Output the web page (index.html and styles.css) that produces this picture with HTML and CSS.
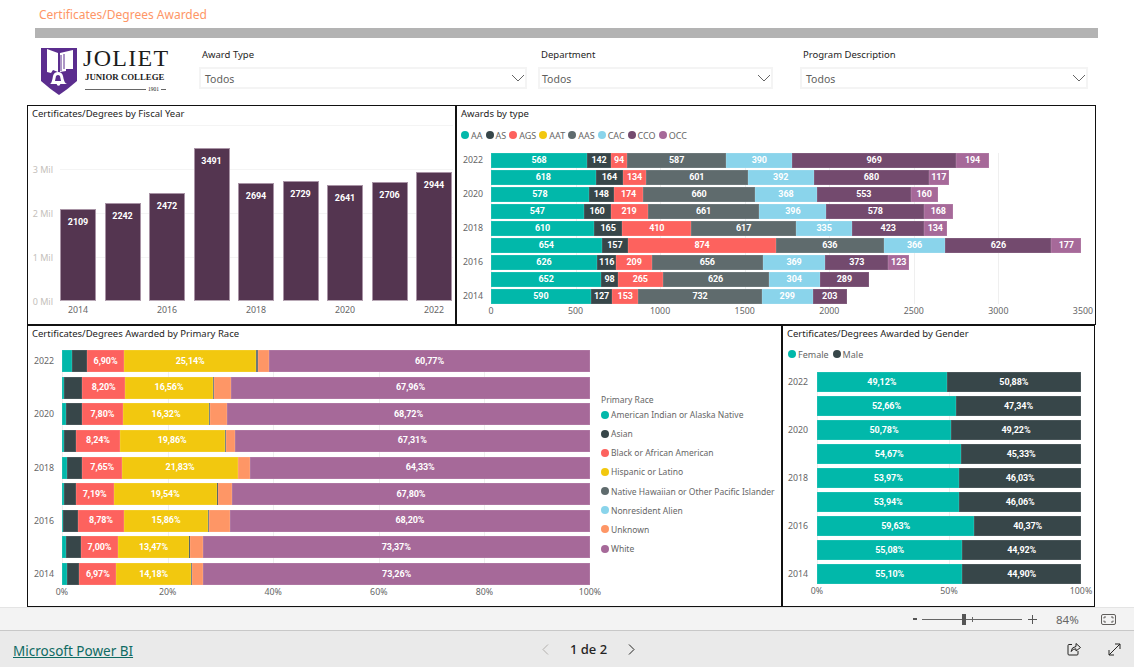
FILE: index.html
```html
<!DOCTYPE html>
<html lang="en">
<head>
<meta charset="utf-8">
<title>Certificates/Degrees Awarded</title>
<link rel="stylesheet" href="styles.css">
</head>
<body>
<div class="page">
  <header class="report-title">Certificates/Degrees Awarded</header>
  <div class="rule"></div>
  <section class="filters">
    <div class="logo">
      <svg class="shield" viewBox="0 0 36 47" width="36" height="47" aria-hidden="true">
        <path d="M0 0 L36 0 L36 33 Q27 41 18 47 Q9 41 0 33 Z" fill="#5b2d8e"/>
        <path d="M6 1 L17 5 L17 24 L12 22 L10 25 L6 24 Z" fill="#fff"/>
        <path d="M19 5 L32 2 L32 21 L25 21 L25 23 L19 24 Z" fill="#fff"/>
        <path d="M20 7 L20 23 M23 6 L23 21" stroke="#5b2d8e" stroke-width="1" fill="none"/>
        <path d="M9 36 Q11 35 12 28 Q13 24 17 24 Q21 24 22 28 Q23 35 26 36 Z" fill="#fff"/>
        <path d="M15 28 Q17 26 19 28 L20 33 L14 33 Z" fill="#5b2d8e"/>
        <circle cx="17.5" cy="36" r="1.8" fill="#fff"/>
      </svg>
      <div class="wordmark">
        <div class="wm-joliet">JOLIET</div>
        <div class="wm-college">JUNIOR COLLEGE</div>
        <div class="wm-year"><span class="wm-line"></span><span>1901</span><span class="wm-tail"></span></div>
      </div>
    </div>
    <div class="slicer slicer-award">
      <div class="slicer-label">Award Type</div>
      <div class="slicer-box"><span>Todos</span><svg class="chev" viewBox="0 0 14 8" width="14" height="8"><path d="M1 1 L7 7 L13 1" fill="none" stroke="#666" stroke-width="1"/></svg></div>
    </div>
    <div class="slicer slicer-dept">
      <div class="slicer-label">Department</div>
      <div class="slicer-box"><span>Todos</span><svg class="chev" viewBox="0 0 14 8" width="14" height="8"><path d="M1 1 L7 7 L13 1" fill="none" stroke="#666" stroke-width="1"/></svg></div>
    </div>
    <div class="slicer slicer-prog">
      <div class="slicer-label">Program Description</div>
      <div class="slicer-box"><span>Todos</span><svg class="chev" viewBox="0 0 14 8" width="14" height="8"><path d="M1 1 L7 7 L13 1" fill="none" stroke="#666" stroke-width="1"/></svg></div>
    </div>
  </section>

  <main class="dash">
    <div class="dash-row row-top">
      <section class="panel panel-year">
        <h2 class="panel-title">Certificates/Degrees by Fiscal Year</h2>
        <div class="year-chart">
          <div class="y-axis"><span>3 Mil</span><span>2 Mil</span><span>1 Mil</span><span>0 Mil</span></div>
          <div class="year-main">
            <div class="columns">
              <div class="col" style="--v:2109">2109</div>
              <div class="col" style="--v:2242">2242</div>
              <div class="col" style="--v:2472">2472</div>
              <div class="col" style="--v:3491">3491</div>
              <div class="col" style="--v:2694">2694</div>
              <div class="col" style="--v:2729">2729</div>
              <div class="col" style="--v:2641">2641</div>
              <div class="col" style="--v:2706">2706</div>
              <div class="col" style="--v:2944">2944</div>
            </div>
            <div class="col-axis"><span>2014</span><span></span><span>2016</span><span></span><span>2018</span><span></span><span>2020</span><span></span><span>2022</span></div>
          </div>
        </div>
      </section>

      <section class="panel panel-type">
        <h2 class="panel-title">Awards by type</h2>
        <ul class="legend legend-h">
          <li><i class="dot c-aa"></i>AA</li>
          <li><i class="dot c-as"></i>AS</li>
          <li><i class="dot c-ags"></i>AGS</li>
          <li><i class="dot c-aat"></i>AAT</li>
          <li><i class="dot c-aas"></i>AAS</li>
          <li><i class="dot c-cac"></i>CAC</li>
          <li><i class="dot c-cco"></i>CCO</li>
          <li><i class="dot c-occ"></i>OCC</li>
        </ul>
        <div class="hchart">
          <div class="cats"><span>2022</span><span></span><span>2020</span><span></span><span>2018</span><span></span><span>2016</span><span></span><span>2014</span></div>
          <div class="plot">
            <div class="bar"><b class="c-aa" style="--v:568">568</b><b class="c-as" style="--v:142">142</b><b class="c-ags" style="--v:94">94</b><b class="c-aas" style="--v:587">587</b><b class="c-cac" style="--v:390">390</b><b class="c-cco" style="--v:969">969</b><b class="c-occ" style="--v:194">194</b></div>
            <div class="bar"><b class="c-aa" style="--v:618">618</b><b class="c-as" style="--v:164">164</b><b class="c-ags" style="--v:134">134</b><b class="c-aas" style="--v:601">601</b><b class="c-cac" style="--v:392">392</b><b class="c-cco" style="--v:680">680</b><b class="c-occ" style="--v:117">117</b></div>
            <div class="bar"><b class="c-aa" style="--v:578">578</b><b class="c-as" style="--v:148">148</b><b class="c-ags" style="--v:174">174</b><b class="c-aas" style="--v:660">660</b><b class="c-cac" style="--v:368">368</b><b class="c-cco" style="--v:553">553</b><b class="c-occ" style="--v:160">160</b></div>
            <div class="bar"><b class="c-aa" style="--v:547">547</b><b class="c-as" style="--v:160">160</b><b class="c-ags" style="--v:219">219</b><b class="c-aas" style="--v:661">661</b><b class="c-cac" style="--v:396">396</b><b class="c-cco" style="--v:578">578</b><b class="c-occ" style="--v:168">168</b></div>
            <div class="bar"><b class="c-aa" style="--v:610">610</b><b class="c-as" style="--v:165">165</b><b class="c-ags" style="--v:410">410</b><b class="c-aas" style="--v:617">617</b><b class="c-cac" style="--v:335">335</b><b class="c-cco" style="--v:423">423</b><b class="c-occ" style="--v:134">134</b></div>
            <div class="bar"><b class="c-aa" style="--v:654">654</b><b class="c-as" style="--v:157">157</b><b class="c-ags" style="--v:874">874</b><b class="c-aas" style="--v:636">636</b><b class="c-cac" style="--v:366">366</b><b class="c-cco" style="--v:626">626</b><b class="c-occ" style="--v:177">177</b></div>
            <div class="bar"><b class="c-aa" style="--v:626">626</b><b class="c-as" style="--v:116">116</b><b class="c-ags" style="--v:209">209</b><b class="c-aas" style="--v:656">656</b><b class="c-cac" style="--v:369">369</b><b class="c-cco" style="--v:373">373</b><b class="c-occ" style="--v:123">123</b></div>
            <div class="bar"><b class="c-aa" style="--v:652">652</b><b class="c-as" style="--v:98">98</b><b class="c-ags" style="--v:265">265</b><b class="c-aas" style="--v:626">626</b><b class="c-cac" style="--v:304">304</b><b class="c-cco" style="--v:289">289</b></div>
            <div class="bar"><b class="c-aa" style="--v:590">590</b><b class="c-as" style="--v:127">127</b><b class="c-ags" style="--v:153">153</b><b class="c-aas" style="--v:732">732</b><b class="c-cac" style="--v:299">299</b><b class="c-cco" style="--v:203">203</b></div>
          </div>
          <div class="x-axis"><span>0</span><span>500</span><span>1000</span><span>1500</span><span>2000</span><span>2500</span><span>3000</span><span>3500</span></div>
        </div>
      </section>
    </div>

    <div class="dash-row row-bottom">
      <section class="panel panel-race">
        <h2 class="panel-title">Certificates/Degrees Awarded by Primary Race</h2>
        <div class="race-body">
          <div class="hchart">
            <div class="cats"><span>2022</span><span></span><span>2020</span><span></span><span>2018</span><span></span><span>2016</span><span></span><span>2014</span></div>
            <div class="plot">
              <div class="bar"><b class="c-aa" style="--v:1.9"></b><b class="c-as" style="--v:2.9"></b><b class="c-ags" style="--v:6.9">6,90%</b><b class="c-aat" style="--v:25.14">25,14%</b><b class="c-aas" style="--v:.3"></b><b class="c-unk" style="--v:2.09"></b><b class="c-occ" style="--v:60.77">60,77%</b></div>
              <div class="bar"><b class="c-aa" style="--v:.4"></b><b class="c-as" style="--v:3.4"></b><b class="c-ags" style="--v:8.2">8,20%</b><b class="c-aat" style="--v:16.56">16,56%</b><b class="c-aas" style="--v:.2"></b><b class="c-unk" style="--v:3.28"></b><b class="c-occ" style="--v:67.96">67,96%</b></div>
              <div class="bar"><b class="c-aa" style="--v:.75"></b><b class="c-as" style="--v:3"></b><b class="c-ags" style="--v:7.8">7,80%</b><b class="c-aat" style="--v:16.32">16,32%</b><b class="c-aas" style="--v:.1"></b><b class="c-unk" style="--v:3.31"></b><b class="c-occ" style="--v:68.72">68,72%</b></div>
              <div class="bar"><b class="c-aa" style="--v:.35"></b><b class="c-as" style="--v:2.35"></b><b class="c-ags" style="--v:8.24">8,24%</b><b class="c-aat" style="--v:19.86">19,86%</b><b class="c-aas" style="--v:.2"></b><b class="c-unk" style="--v:1.69"></b><b class="c-occ" style="--v:67.31">67,31%</b></div>
              <div class="bar"><b class="c-aa" style="--v:1"></b><b class="c-as" style="--v:2.8"></b><b class="c-ags" style="--v:7.65">7,65%</b><b class="c-aat" style="--v:21.83">21,83%</b><b class="c-aas" style="--v:.1"></b><b class="c-unk" style="--v:2.29"></b><b class="c-occ" style="--v:64.33">64,33%</b></div>
              <div class="bar"><b class="c-aa" style="--v:.3"></b><b class="c-as" style="--v:2.3"></b><b class="c-ags" style="--v:7.19">7,19%</b><b class="c-aat" style="--v:19.54">19,54%</b><b class="c-as" style="--v:.2"></b><b class="c-unk" style="--v:2.67"></b><b class="c-occ" style="--v:67.8">67,80%</b></div>
              <div class="bar"><b class="c-aa" style="--v:.2"></b><b class="c-as" style="--v:2.8"></b><b class="c-ags" style="--v:8.78">8,78%</b><b class="c-aat" style="--v:15.86">15,86%</b><b class="c-aas" style="--v:.3"></b><b class="c-unk" style="--v:3.86"></b><b class="c-occ" style="--v:68.2">68,20%</b></div>
              <div class="bar"><b class="c-aa" style="--v:.7"></b><b class="c-as" style="--v:2.9"></b><b class="c-ags" style="--v:7">7,00%</b><b class="c-aat" style="--v:13.47">13,47%</b><b class="c-as" style="--v:.16"></b><b class="c-unk" style="--v:2.4"></b><b class="c-occ" style="--v:73.37">73,37%</b></div>
              <div class="bar"><b class="c-aa" style="--v:1"></b><b class="c-as" style="--v:2.3"></b><b class="c-ags" style="--v:6.97">6,97%</b><b class="c-aat" style="--v:14.18">14,18%</b><b class="c-aas" style="--v:.2"></b><b class="c-unk" style="--v:2.09"></b><b class="c-occ" style="--v:73.26">73,26%</b></div>
            </div>
            <div class="x-axis"><span>0%</span><span>20%</span><span>40%</span><span>60%</span><span>80%</span><span>100%</span></div>
          </div>
          <div class="race-legend">
            <div class="legend-title">Primary Race</div>
            <ul class="legend legend-v">
              <li><i class="dot c-aa"></i>American Indian or Alaska Native</li>
              <li><i class="dot c-as"></i>Asian</li>
              <li><i class="dot c-ags"></i>Black or African American</li>
              <li><i class="dot c-aat"></i>Hispanic or Latino</li>
              <li><i class="dot c-aas"></i>Native Hawaiian or Other Pacific Islander</li>
              <li><i class="dot c-cac"></i>Nonresident Alien</li>
              <li><i class="dot c-unk"></i>Unknown</li>
              <li><i class="dot c-occ"></i>White</li>
            </ul>
          </div>
        </div>
      </section>

      <section class="panel panel-gender">
        <h2 class="panel-title">Certificates/Degrees Awarded by Gender</h2>
        <ul class="legend legend-h">
          <li><i class="dot c-aa"></i>Female</li>
          <li><i class="dot c-as"></i>Male</li>
        </ul>
        <div class="hchart">
          <div class="cats"><span>2022</span><span></span><span>2020</span><span></span><span>2018</span><span></span><span>2016</span><span></span><span>2014</span></div>
          <div class="plot">
            <div class="bar"><b class="c-aa" style="--v:49.12">49,12%</b><b class="c-as" style="--v:50.88">50,88%</b></div>
            <div class="bar"><b class="c-aa" style="--v:52.66">52,66%</b><b class="c-as" style="--v:47.34">47,34%</b></div>
            <div class="bar"><b class="c-aa" style="--v:50.78">50,78%</b><b class="c-as" style="--v:49.22">49,22%</b></div>
            <div class="bar"><b class="c-aa" style="--v:54.67">54,67%</b><b class="c-as" style="--v:45.33">45,33%</b></div>
            <div class="bar"><b class="c-aa" style="--v:53.97">53,97%</b><b class="c-as" style="--v:46.03">46,03%</b></div>
            <div class="bar"><b class="c-aa" style="--v:53.94">53,94%</b><b class="c-as" style="--v:46.06">46,06%</b></div>
            <div class="bar"><b class="c-aa" style="--v:59.63">59,63%</b><b class="c-as" style="--v:40.37">40,37%</b></div>
            <div class="bar"><b class="c-aa" style="--v:55.08">55,08%</b><b class="c-as" style="--v:44.92">44,92%</b></div>
            <div class="bar"><b class="c-aa" style="--v:55.1">55,10%</b><b class="c-as" style="--v:44.9">44,90%</b></div>
          </div>
          <div class="x-axis"><span>0%</span><span>50%</span><span>100%</span></div>
        </div>
      </section>
    </div>
  </main>

  <div class="zoombar">
    <span class="zoom-minus"></span>
    <div class="zoom-track"><span class="zoom-tick"></span><span class="zoom-thumb"></span></div>
    <svg class="zoom-plus" viewBox="0 0 9 9" width="9" height="9"><path d="M4.5 0 V9 M0 4.5 H9" stroke="#555" stroke-width="1"/></svg>
    <span class="zoom-value">84%</span>
    <svg class="zoom-fit" viewBox="0 0 15 11" width="15" height="11"><rect x=".5" y=".5" width="14" height="10" rx="1.5" fill="none" stroke="#605e5c"/><path d="M3 4.5 V3 H5 M10 3 H12 V4.5 M12 6.5 V8 H10 M5 8 H3 V6.5" fill="none" stroke="#605e5c"/></svg>
  </div>

  <footer class="footer">
    <a class="pbi-link" href="#">Microsoft Power BI</a>
    <nav class="pager">
      <svg viewBox="0 0 7 11" width="7" height="11"><path d="M6 .5 L1 5.5 L6 10.5" fill="none" stroke="#b3b0ad" stroke-width="1"/></svg>
      <span class="pager-text">1 de 2</span>
      <svg viewBox="0 0 7 11" width="7" height="11"><path d="M1 .5 L6 5.5 L1 10.5" fill="none" stroke="#252423" stroke-width="1"/></svg>
    </nav>
    <div class="footer-icons">
      <svg viewBox="0 0 14 14" width="14" height="14"><path d="M5 2.5 H2 Q1 2.5 1 3.5 V12 Q1 13 2 13 H10 Q11 13 11 12 V9" fill="none" stroke="#252423"/><path d="M4 9.5 Q4.5 5 9 4.5 V1.5 L13.5 5.5 L9 9 V6.8 Q6 6.8 4 9.5 Z" fill="none" stroke="#252423"/></svg>
      <svg viewBox="0 0 13 13" width="13" height="13"><path d="M1 12 L12 1 M7 1 H12 V6 M1 7 V12 H6" fill="none" stroke="#252423"/></svg>
    </div>
  </footer>
</div>
</body>
</html>
```
FILE: styles.css
```css
* { box-sizing: border-box; }
html, body { margin: 0; padding: 0; background: #fff; }
body { font-family: "Noto Sans", "Open Sans", sans-serif; color: #252423; overflow: hidden; }
.page { width: 1134px; height: 667px; display: flex; flex-direction: column; overflow: hidden; }

.report-title { height: 28px; padding: 6px 0 0 39px; font-size: 12px; line-height: 17px; color: #fe9666; }
.rule { height: 10px; margin: 0 36px 0 35px; background: #b3b3b3; }

.filters { height: 67px; padding: 8px 0 0 41px; display: flex; align-items: flex-start; }
.logo { width: 125px; display: flex; gap: 6px; padding-top: 2px; }
.shield { flex: none; }
.wordmark { font-family: "Liberation Serif", serif; color: #1c1c1c; flex: 1; }
.wm-joliet { font-size: 24px; line-height: 20px; letter-spacing: 1.3px; white-space: nowrap; }
.wm-college { font-size: 8.8px; line-height: 11px; margin-top: 4px; white-space: nowrap; font-weight: bold; padding-left: 2px; }
.wm-year { display: flex; align-items: center; gap: 2px; font-size: 5.5px; line-height: 8px; margin-top: 2px; padding-left: 2px; }
.wm-line { width: 61px; height: 1px; background: #666; }
.wm-tail { width: 5px; height: 1px; background: #666; }

.slicer { display: flex; flex-direction: column; }
.slicer-label { height: 21px; padding: 2px 0 0 3px; font-size: 9.5px; line-height: 14px; }
.slicer-box { height: 22px; border: 2px solid #f4f4f4; display: flex; align-items: center; justify-content: space-between; padding: 1px 0 0 4px; font-size: 10.5px; color: #605e5c; }
.chev { margin-top: -2px; }
.slicer-award { width: 328px; margin-left: 33px; }
.slicer-dept { width: 235px; margin-left: 11px; }
.slicer-dept .slicer-box { padding-left: 2px; }
.slicer-prog { width: 288px; margin-left: 27px; }

.dash { margin-left: 27px; display: flex; flex-direction: column; height: 502px; }
.dash-row { display: flex; }
.row-top { height: 220px; }
.row-bottom { height: 282px; }
.panel { border: 1px solid #111; padding: 0; }
.panel-year { width: 429px; }
.panel-type { width: 640px; }
.panel-race { width: 755px; }
.panel-gender { width: 313px; }
.panel-title { margin: 0; font-weight: 400; font-size: 9.5px; line-height: 14px; padding: 1px 0 0 4px; color: #252423; white-space: nowrap; }

.year-chart { display: flex; }
.y-axis { width: 32px; margin-top: 27px; display: flex; flex-direction: column; font-size: 9px; color: #c4c0bb; text-align: right; padding-right: 7px; }
.y-axis span { height: 44px; line-height: 44px; white-space: nowrap; }
.year-main { display: flex; flex-direction: column; }
.columns { height: 180px; display: grid; grid-template-columns: repeat(9, 36px); column-gap: 8.5px; align-items: end;
  background: repeating-linear-gradient(to top, #fff 0 43px, #f4f4f4 43px 44px); width: 393px; }
.col { height: calc(var(--v) * .04383px); background: #543550; border: 1px solid #a893a5; border-bottom-color: #b9a9b6; text-align: center;
  font: bold 9px/1 "Roboto", sans-serif; letter-spacing: -.1px; color: #fff; padding-top: 8px; }
.col-axis { display: grid; grid-template-columns: repeat(9, 36px); column-gap: 8.5px; text-align: center; font-size: 8.8px; line-height: 13px; padding-top: 3px; color: #666; }

.legend { list-style: none; margin: 0; padding: 0; font-size: 9px; color: #666; }
.legend li { display: flex; align-items: center; white-space: nowrap; }
.dot { width: 8px; height: 8px; border-radius: 50%; margin-right: 2px; flex: none; }
.legend-h { display: flex; gap: 3px; padding-left: 5px; height: 14px; }

.c-aa { background: #01b8aa; }
.c-as { background: #374649; }
.c-ags { background: #fd625e; }
.c-aat { background: #f2c80f; }
.c-aas { background: #5f6b6d; }
.c-cac { background: #8ad4eb; }
.c-cco { background: #734a6e; }
.c-occ { background: #a66999; }
.c-unk { background: #fe9666; }

.hchart { display: grid; }
.cats { display: flex; flex-direction: column; font-size: 8.8px; color: #666; }
.cats span { display: block; white-space: nowrap; }
.plot { display: flex; flex-direction: column; }
.bar { display: flex; }
.bar b { flex: none; height: 100%; display: flex; align-items: center; justify-content: center; white-space: nowrap;
  font: bold 9px/1 "Roboto", sans-serif; letter-spacing: -.1px; color: #fff; box-shadow: inset 0 0 0 .5px rgba(255,255,255,.18); }
.x-axis { display: grid; font-size: 8.8px; line-height: 13px; color: #666; text-align: center; grid-column: 2; white-space: nowrap; }

/* Awards by type */
.panel-type .legend-h { margin-top: 7px; padding-left: 4px; }
.panel-type .hchart { grid-template-columns: 34px 592px; margin-top: 11px; }
.panel-type .cats { padding-left: 6px; gap: 2px; }
.panel-type .cats span { height: 15px; line-height: 15px; }
.panel-type .plot { gap: 2px; background: repeating-linear-gradient(to right, #efefef 0 1px, transparent 1px 84.57px); height: 151px; }
.panel-type .bar { height: 15px; }
.panel-type .bar b { width: calc(var(--v) * 1% / 35); }
.panel-type .x-axis { grid-template-columns: repeat(8, 84.57px); margin-left: -42.3px; padding-top: 1px; }

/* Race */
.race-body { display: flex; }
.panel-race .hchart { grid-template-columns: 34px 528px; margin-top: 9px; width: 562px; }
.panel-race .cats { padding-left: 6px; row-gap: 4.625px; }
.panel-race .cats span { height: 22px; line-height: 22px; }
.panel-race .plot { row-gap: 4.625px; background: repeating-linear-gradient(to right, #efefef 0 1px, transparent 1px 105.6px); height: 235px; }
.panel-race .bar { height: 22px; }
.panel-race .bar b { width: calc(var(--v) * 1%); }
.panel-race .x-axis { grid-template-columns: repeat(6, 105.6px); margin-left: -52.8px; padding-top: 1px; }
.race-legend { margin: 52px 0 0 11px; font-size: 8.5px; color: #666; }
.race-legend .legend { font-size: 8.5px; }
.legend-title { line-height: 13px; height: 12px; }
.legend-v li { height: 19.15px; }

/* Gender */
.panel-gender .legend-h { margin-top: 6px; gap: 4px; }
.panel-gender .hchart { grid-template-columns: 34px 264px; margin-top: 11px; }
.panel-gender .cats { padding-left: 5px; gap: 4px; }
.panel-gender .cats span { height: 20px; line-height: 20px; }
.panel-gender .plot { gap: 4px; background: repeating-linear-gradient(to right, #efefef 0 1px, transparent 1px 132px); height: 212px; }
.panel-gender .bar { height: 20px; }
.panel-gender .bar b { width: calc(var(--v) * 1%); }
.panel-gender .x-axis { grid-template-columns: repeat(3, 132px); margin-left: -66px; padding-top: 1px; }

.zoombar { height: 24px; background: #f3f3f3; border-bottom: 1px solid #c8c8c8; display: flex; align-items: center; padding-left: 913px; border-top: 1px solid #e4e4e4; }
.zoom-minus { width: 4px; height: 2px; background: #555; }
.zoom-track { width: 100px; height: 1px; background: #666; margin-left: 5px; position: relative; }
.zoom-thumb { position: absolute; left: 40px; top: -5px; width: 4px; height: 11px; background: #555; }
.zoom-tick { position: absolute; left: 50px; top: -2px; width: 1px; height: 5px; background: #666; }
.zoom-plus { margin-left: 6px; }
.zoom-value { margin-left: 19px; width: 24px; font-size: 11.5px; color: #666; }
.zoom-fit { margin-left: 21px; }

.footer { flex: 1; background: #eaeaea; display: grid; grid-template-columns: 542px 93px 1fr; align-items: center; }
.pbi-link { padding: 3px 0 0 13px; font-size: 13.5px; color: #0f6a63; text-decoration: underline; white-space: nowrap; }
.pager { display: flex; align-items: center; justify-content: space-between; }
.pager-text { font-size: 13px; color: #252423; font-weight: 500; }
.footer-icons { display: flex; align-items: center; gap: 27px; padding-left: 432px; }
```
